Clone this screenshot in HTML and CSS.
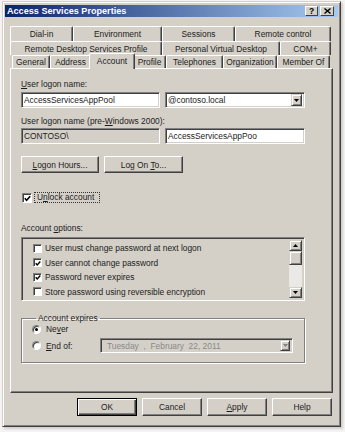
FILE: index.html
```html
<!DOCTYPE html>
<html>
<head>
<meta charset="utf-8">
<link rel="stylesheet" href="styles.css">
</head>
<body>
<div class="window">
  <div class="titlebar">
    <span class="title">Access Services Properties</span>
    <div class="tb-btns">
      <span class="tb-btn">?</span>
      <span class="tb-btn tb-x"><svg width="7" height="6" viewBox="0 0 7 6"><path d="M0.5 0.5 L6.5 5.5 M6.5 0.5 L0.5 5.5" stroke="#000" stroke-width="1.4"/></svg></span>
    </div>
  </div>
  <div class="client">
    <div class="tabs">
      <div class="tabrow r1">
        <div class="tab w-dialin">Dial-in</div>
        <div class="tab w-env">Environment</div>
        <div class="tab w-sess">Sessions</div>
        <div class="tab w-rc">Remote control</div>
      </div>
      <div class="tabrow r2">
        <div class="tab w-rds">Remote Desktop Services Profile</div>
        <div class="tab w-pvd">Personal Virtual Desktop</div>
        <div class="tab w-com">COM+</div>
      </div>
      <div class="tabrow r3">
        <div class="tab w-gen">General</div>
        <div class="tab w-addr">Address</div>
        <div class="tab sel">Account</div>
        <div class="tab w-prof">Profile</div>
        <div class="tab w-tel">Telephones</div>
        <div class="tab w-org">Organization</div>
        <div class="tab w-mem">Member Of</div>
      </div>
    </div>
    <div class="panel">
      <div class="lbl"><u>U</u>ser logon name:</div>
      <div class="field-row">
        <div class="input w139">AccessServicesAppPool</div>
        <div class="input combo w140"><span class="combo-text">@contoso.local</span><span class="drop"><svg width="5" height="3" viewBox="0 0 5 3"><path d="M0 0 H5 L2.5 3 Z" fill="#000"/></svg></span></div>
      </div>
      <div class="lbl lbl2">User logon name (pre-<u>W</u>indows 2000):</div>
      <div class="field-row fr2">
        <div class="input disabled w139">CONTOSO\</div>
        <div class="input w140">AccessServicesAppPoo</div>
      </div>
      <div class="btn-row">
        <div class="btn w78"><span><u>L</u>ogon Hours...</span></div>
        <div class="btn w79"><span>Log On <u>T</u>o...</span></div>
      </div>
      <div class="check-row">
        <span class="cb"><svg width="7" height="7" viewBox="0 0 7 7"><path d="M0.8 3.3 L2.6 5.2 L6.2 1.2" stroke="#000" stroke-width="1.6" fill="none"/></svg></span>
        <span class="focus">U<u>n</u>lock account</span>
      </div>
      <div class="lbl lbl3">Account <u>o</u>ptions:</div>
      <div class="listbox">
        <div class="items">
          <div class="item"><span class="cb"></span><span class="itxt">User must change password at next logon</span></div>
          <div class="item"><span class="cb"><svg width="7" height="7" viewBox="0 0 7 7"><path d="M0.8 3.3 L2.6 5.2 L6.2 1.2" stroke="#000" stroke-width="1.6" fill="none"/></svg></span><span class="itxt">User cannot change password</span></div>
          <div class="item"><span class="cb"><svg width="7" height="7" viewBox="0 0 7 7"><path d="M0.8 3.3 L2.6 5.2 L6.2 1.2" stroke="#000" stroke-width="1.6" fill="none"/></svg></span><span class="itxt">Password never expires</span></div>
          <div class="item"><span class="cb"></span><span class="itxt">Store password using reversible encryption</span></div>
        </div>
        <div class="vscroll">
          <span class="sb-btn"><svg width="5" height="3" viewBox="0 0 5 3"><path d="M0 3 H5 L2.5 0 Z" fill="#000"/></svg></span>
          <span class="sb-thumb"></span>
          <span class="sb-track"></span>
          <span class="sb-btn"><svg width="5" height="3" viewBox="0 0 5 3"><path d="M0 0 H5 L2.5 3 Z" fill="#000"/></svg></span>
        </div>
      </div>
      <fieldset class="group">
        <legend>Account expires</legend>
        <div class="radio-row">
          <span class="radio on"></span>
          <span class="rlabel">Ne<u>v</u>er</span>
        </div>
        <div class="radio-row r-end">
          <span class="radio"></span>
          <span class="rlabel end-lbl"><u>E</u>nd of:</span>
          <div class="datepick"><span class="date-text">Tuesday  ,  February  22, 2011</span><span class="drop dis"><svg width="5" height="3" viewBox="0 0 5 3"><path d="M0 0 H5 L2.5 3 Z" fill="#808080"/></svg></span></div>
        </div>
      </fieldset>
    </div>
    <div class="footer">
      <div class="btn fbtn default">OK</div>
      <div class="btn fbtn">Cancel</div>
      <div class="btn fbtn"><span><u>A</u>pply</span></div>
      <div class="btn fbtn">Help</div>
    </div>
  </div>
</div>
</body>
</html>
```

FILE: styles.css
```css
* { box-sizing: border-box; }
html, body { margin: 0; padding: 0; }
body {
  width: 345px;
  height: 432px;
  overflow: hidden;
  background: #f4f3f1;
  font-family: "Liberation Sans", Arial, sans-serif;
  font-size: 8.4px;
  color: #1c1c1c;
}
u { text-decoration: underline; text-underline-offset: 1px; }

.window {
  margin: 1px 0 0 2px;
  width: 339px;
  height: 426px;
  background: #d4d0c8;
  border: 1px solid;
  border-color: #d4d0c8 #404040 #404040 #d4d0c8;
  box-shadow: inset 1px 1px #ffffff, inset -1px -1px #808080, 2px 2px 2px rgba(0,0,0,0.15);
  padding: 2px;
}

.titlebar {
  margin-top: 1px;
  height: 12px;
  display: flex;
  align-items: center;
  justify-content: space-between;
  padding: 0 4px 0 2px;
  background: linear-gradient(to right, #0a246a, #a6caf0);
}
.title {
  color: #fff;
  font-weight: bold;
  font-size: 9.1px;
  white-space: nowrap;
}
.tb-btns { display: flex; gap: 2px; }
.tb-btn {
  width: 13px;
  height: 10px;
  background: #d4d0c8;
  border: 1px solid;
  border-color: #fff #404040 #404040 #fff;
  display: flex;
  align-items: center;
  justify-content: center;
  font-weight: bold;
  font-size: 8.5px;
  color: #000;
  line-height: 1;
}
.tb-x { width: 14px; }

.client { padding: 9px 0 0 5px; }

.tabs { width: 321px; }
.tabrow { display: flex; height: 15px; }
.r2 { height: 14px; }
.r3 { height: 13px; padding-left: 2px; }
.tab {
  flex: none;
  background: #d4d0c8;
  border-top: 1px solid #fff;
  border-left: 1px solid #fff;
  border-right: 1px solid #404040;
  border-radius: 2px 2px 0 0;
  box-shadow: inset -1px 0 #808080;
  display: flex;
  align-items: center;
  justify-content: center;
  white-space: nowrap;
}
.w-dialin { width: 63px; }
.w-env { width: 89px; }
.w-sess { width: 73px; }
.w-rc { width: 96px; }
.w-rds { width: 152px; }
.w-pvd { width: 118px; }
.w-com { width: 51px; }
.w-gen { width: 38px; }
.w-addr { width: 41px; }
.w-prof { width: 33px; }
.w-tel { width: 57px; }
.w-org { width: 54px; }
.w-mem { width: 53px; }
.tab.sel {
  width: 46px;
  height: 16px;
  margin: -2px -2px 0 -2px;
  position: relative;
  z-index: 2;
  padding-bottom: 1px;
}

.panel {
  position: relative;
  z-index: 1;
  width: 323px;
  height: 325px;
  border: 1px solid;
  border-color: #fff #404040 #404040 #fff;
  box-shadow: inset -1px -1px #808080;
  padding: 10px 0 0 10px;
}
.lbl { height: 10px; line-height: 10px; white-space: nowrap; }
.lbl2 { margin-top: 8px; }
.lbl3 { margin-top: 20px; }

.field-row { display: flex; gap: 5px; margin-top: 3px; }
.fr2 { margin-top: 2px; }
.input {
  height: 16px;
  background: #fff;
  border: 1px solid;
  border-color: #808080 #fff #fff #808080;
  box-shadow: inset 1px 1px #404040, inset -1px -1px #d4d0c8;
  padding-left: 2px;
  display: flex;
  align-items: center;
  white-space: nowrap;
  overflow: hidden;
}
.input.disabled { background: #d4d0c8; }
.w139 { width: 139px; }
.w140 { width: 140px; }
.combo { padding-right: 2px; }
.combo-text { flex: 1; }
.drop {
  width: 11px;
  height: 12px;
  background: #d4d0c8;
  border: 1px solid;
  border-color: #d4d0c8 #404040 #404040 #d4d0c8;
  box-shadow: inset 1px 1px #fff, inset -1px -1px #808080;
  display: flex;
  align-items: center;
  justify-content: center;
  flex: none;
}

.btn-row { display: flex; gap: 5px; margin-top: 12px; }
.btn {
  height: 17px;
  background: #d4d0c8;
  border: 1px solid;
  border-color: #fff #404040 #404040 #fff;
  box-shadow: inset -1px -1px #808080;
  display: flex;
  align-items: center;
  justify-content: center;
  white-space: nowrap;
}
.w78 { width: 78px; }
.w79 { width: 79px; }

.check-row { display: flex; align-items: center; margin-top: 19px; height: 11px; }
.cb {
  flex: none;
  width: 9px;
  height: 9px;
  background: #fff;
  border: 1px solid;
  border-color: #808080 #fff #fff #808080;
  box-shadow: inset 1px 1px #404040;
  display: flex;
  align-items: center;
  justify-content: center;
  padding: 1px 0 0 1px;
}
.check-row .cb { margin-left: 1px; width: 10px; height: 10px; }
.focus {
  margin-left: 2px;
  height: 11px;
  width: 66px;
  border: 1px dotted #333;
  padding-left: 2px;
  line-height: 9px;
  white-space: nowrap;
}

.listbox {
  margin-top: 4px;
  width: 284px;
  height: 64px;
  display: flex;
  border: 1px solid;
  border-color: #808080 #fff #fff #808080;
  box-shadow: inset 1px 1px #404040, inset -1px -1px #d4d0c8;
  padding: 2px 2px 2px 2px;
  overflow: hidden;
}
.items { flex: 1; padding: 1px 0 0 9px; }
.item { height: 14.5px; display: flex; align-items: center; white-space: nowrap; }
.itxt { margin-left: 3px; }
.vscroll { width: 13px; display: flex; flex-direction: column; }
.sb-btn, .sb-thumb {
  flex: none;
  height: 11px;
  background: #d4d0c8;
  border: 1px solid;
  border-color: #d4d0c8 #404040 #404040 #d4d0c8;
  box-shadow: inset 1px 1px #fff, inset -1px -1px #808080;
  display: flex;
  align-items: center;
  justify-content: center;
}
.sb-thumb { height: 14px; }
.sb-track { flex: 1; background: #ebe9e5; }

.group {
  margin: 12px 0 0 0;
  padding: 0 0 9px 10px;
  width: 284px;
  min-width: 0;
  border: 1px solid #808080;
  box-shadow: inset 1px 1px #fff, 1px 1px #fff;
}
.group legend {
  padding: 0 2px;
  margin-left: 4px;
  line-height: 10px;
  height: 10px;
}
.radio-row { display: flex; align-items: center; height: 10px; margin-top: 1px; }
.r-end { height: 15px; margin-top: 4px; }
.radio {
  flex: none;
  width: 9px;
  height: 9px;
  border-radius: 50%;
  background: #fff;
  border: 1px solid;
  border-color: #808080 #fff #fff #808080;
  box-shadow: inset 1px 1px #404040;
  display: flex;
  align-items: center;
  justify-content: center;
}
.radio.on::after {
  content: "";
  width: 3px;
  height: 3px;
  border-radius: 50%;
  background: #000;
}
.rlabel { margin-left: 5px; white-space: nowrap; }
.end-lbl { width: 54px; }
.datepick {
  width: 193px;
  height: 15px;
  border: 1px solid;
  border-color: #808080 #fff #fff #808080;
  box-shadow: inset 1px 1px #404040, inset -1px -1px #d4d0c8;
  background: #d4d0c8;
  display: flex;
  align-items: center;
  padding: 0 2px 0 6px;
}
.date-text { flex: 1; color: #8a8a8a; white-space: pre; }
.drop.dis { width: 10px; height: 11px; }

.footer {
  display: flex;
  justify-content: flex-end;
  gap: 5px;
  padding-right: 6px;
  margin-top: 5px;
}
.fbtn { width: 60px; height: 18px; }
.fbtn.default {
  border: 1px solid #000;
  box-shadow: inset 1px 1px #fff, inset -1px -1px #404040, inset -2px -2px #808080;
}
```
